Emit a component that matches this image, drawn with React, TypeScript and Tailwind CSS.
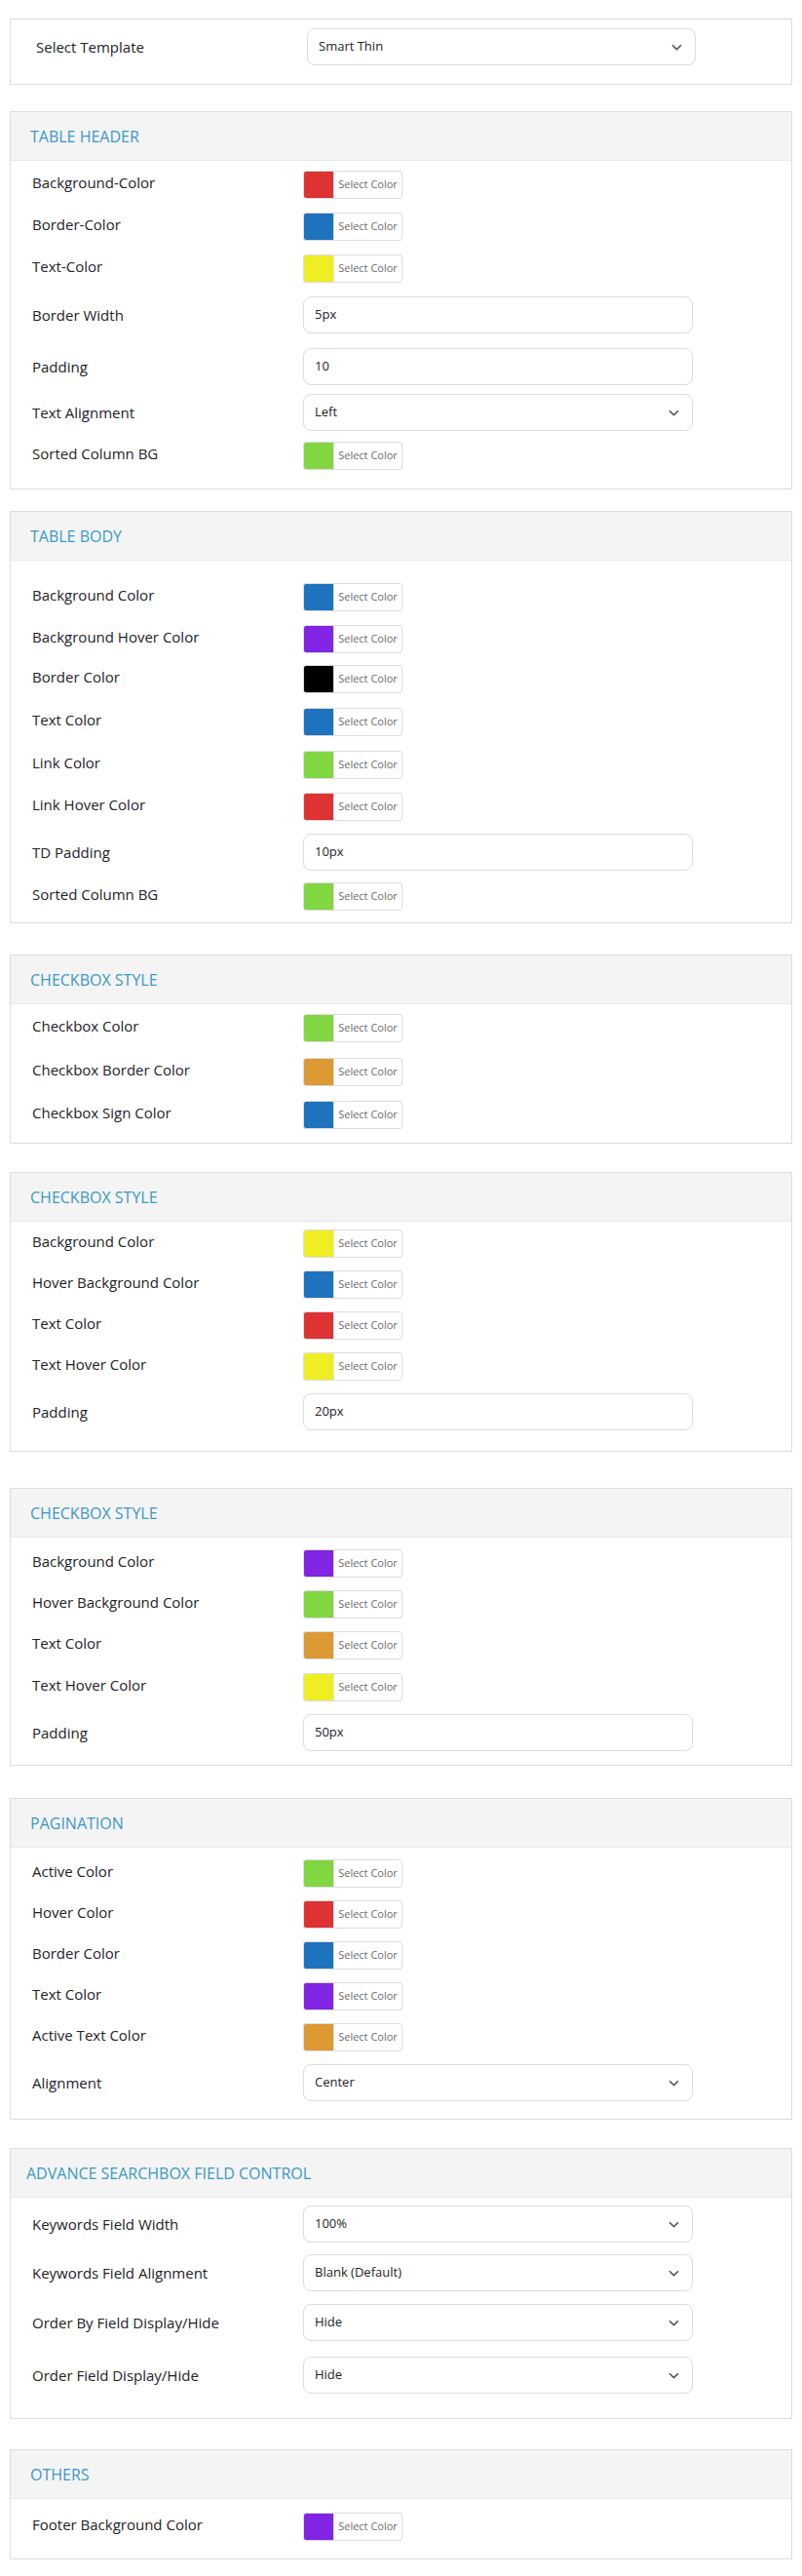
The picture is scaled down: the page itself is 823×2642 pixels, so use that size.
type RowKind = "color" | "input" | "select";

type Row = {
  label: string;
  kind: RowKind;
  value: string;
  mt: string;
};

type Section = {
  title: string;
  mt: string;
  pb: string;
  titlePad: string;
  rows: Row[];
};

const RED = "bg-[#dd3333]";
const BLUE = "bg-[#1e73be]";
const YELLOW = "bg-[#eeee22]";
const GREEN = "bg-[#81d742]";
const PURPLE = "bg-[#8224e3]";
const ORANGE = "bg-[#dd9933]";
const BLACK = "bg-[#000000]";

const sections: Section[] = [
  {
    title: "TABLE HEADER",
    mt: "mt-[27px]",
    pb: "pb-[19px]",
    titlePad: "pl-[20px]",
    rows: [
      { label: "Background-Color", kind: "color", value: RED, mt: "mt-[10px]" },
      { label: "Border-Color", kind: "color", value: BLUE, mt: "mt-[14px]" },
      { label: "Text-Color", kind: "color", value: YELLOW, mt: "mt-[14px]" },
      { label: "Border Width", kind: "input", value: "5px", mt: "mt-[14px]" },
      { label: "Padding", kind: "input", value: "10", mt: "mt-[15px]" },
      { label: "Text Alignment", kind: "select", value: "Left", mt: "mt-[9px]" },
      { label: "Sorted Column BG", kind: "color", value: GREEN, mt: "mt-[11px]" },
    ],
  },
  {
    title: "TABLE BODY",
    mt: "mt-[22px]",
    pb: "pb-[12px]",
    titlePad: "pl-[20px]",
    rows: [
      { label: "Background Color", kind: "color", value: BLUE, mt: "mt-[23px]" },
      { label: "Background Hover Color", kind: "color", value: PURPLE, mt: "mt-[14px]" },
      { label: "Border Color", kind: "color", value: BLACK, mt: "mt-[12px]" },
      { label: "Text Color", kind: "color", value: BLUE, mt: "mt-[15px]" },
      { label: "Link Color", kind: "color", value: GREEN, mt: "mt-[15px]" },
      { label: "Link Hover Color", kind: "color", value: RED, mt: "mt-[14px]" },
      { label: "TD Padding", kind: "input", value: "10px", mt: "mt-[13px]" },
      { label: "Sorted Column BG", kind: "color", value: GREEN, mt: "mt-[12px]" },
    ],
  },
  {
    title: "CHECKBOX STYLE",
    mt: "mt-[32px]",
    pb: "pb-[14px]",
    titlePad: "pl-[20px]",
    rows: [
      { label: "Checkbox Color", kind: "color", value: GREEN, mt: "mt-[10px]" },
      { label: "Checkbox Border Color", kind: "color", value: ORANGE, mt: "mt-[16px]" },
      { label: "Checkbox Sign Color", kind: "color", value: BLUE, mt: "mt-[15px]" },
    ],
  },
  {
    title: "CHECKBOX STYLE",
    mt: "mt-[29px]",
    pb: "pb-[21px]",
    titlePad: "pl-[20px]",
    rows: [
      { label: "Background Color", kind: "color", value: YELLOW, mt: "mt-[8px]" },
      { label: "Hover Background Color", kind: "color", value: BLUE, mt: "mt-[13px]" },
      { label: "Text Color", kind: "color", value: RED, mt: "mt-[13px]" },
      { label: "Text Hover Color", kind: "color", value: YELLOW, mt: "mt-[13px]" },
      { label: "Padding", kind: "input", value: "20px", mt: "mt-[13px]" },
    ],
  },
  {
    title: "CHECKBOX STYLE",
    mt: "mt-[37px]",
    pb: "pb-[14px]",
    titlePad: "pl-[20px]",
    rows: [
      { label: "Background Color", kind: "color", value: PURPLE, mt: "mt-[12px]" },
      { label: "Hover Background Color", kind: "color", value: GREEN, mt: "mt-[13px]" },
      { label: "Text Color", kind: "color", value: ORANGE, mt: "mt-[13px]" },
      { label: "Text Hover Color", kind: "color", value: YELLOW, mt: "mt-[14px]" },
      { label: "Padding", kind: "input", value: "50px", mt: "mt-[13px]" },
    ],
  },
  {
    title: "PAGINATION",
    mt: "mt-[33px]",
    pb: "pb-[18px]",
    titlePad: "pl-[20px]",
    rows: [
      { label: "Active Color", kind: "color", value: GREEN, mt: "mt-[12px]" },
      { label: "Hover Color", kind: "color", value: RED, mt: "mt-[13px]" },
      { label: "Border Color", kind: "color", value: BLUE, mt: "mt-[13px]" },
      { label: "Text Color", kind: "color", value: PURPLE, mt: "mt-[13px]" },
      { label: "Active Text Color", kind: "color", value: ORANGE, mt: "mt-[13px]" },
      { label: "Alignment", kind: "select", value: "Center", mt: "mt-[13px]" },
    ],
  },
  {
    title: "ADVANCE SEARCHBOX FIELD CONTROL",
    mt: "mt-[29px]",
    pb: "pb-[25px]",
    titlePad: "pl-[16px]",
    rows: [
      { label: "Keywords Field Width", kind: "select", value: "100%", mt: "mt-[8px]" },
      { label: "Keywords Field Alignment", kind: "select", value: "Blank (Default)", mt: "mt-[12px]" },
      { label: "Order By Field Display/Hide", kind: "select", value: "Hide", mt: "mt-[13px]" },
      { label: "Order Field Display/Hide", kind: "select", value: "Hide", mt: "mt-[16px]" },
    ],
  },
  {
    title: "OTHERS",
    mt: "mt-[31px]",
    pb: "pb-[18px]",
    titlePad: "pl-[20px]",
    rows: [
      { label: "Footer Background Color", kind: "color", value: PURPLE, mt: "mt-[14px]" },
    ],
  },
];

function Chevron() {
  return (
    <svg width="11" height="7" viewBox="0 0 11 7" fill="none" className="shrink-0">
      <path d="M1 1.2 5.5 5.6 10 1.2" stroke="#50575e" strokeWidth="1.6" />
    </svg>
  );
}

function ColorButton({ swatch }: { swatch: string }) {
  return (
    <div className="flex h-[29px] w-[102px] overflow-hidden rounded-[3px] border border-[#dcdcde] bg-white">
      <span className={`${swatch} h-full w-[30px] shrink-0`} />
      <span className="flex flex-1 items-center justify-center border-l border-[#e2e2e2] text-[11px] text-[#6b6b6b]">
        Select Color
      </span>
    </div>
  );
}

function TextBox({ value, select }: { value: string; select?: boolean }) {
  return (
    <div className="flex h-[38px] w-[400px] items-center justify-between rounded-[8px] border border-[#dcdcde] bg-white pl-[11px] pr-[13px] text-[13px] text-[#1d2327]">
      <span>{value}</span>
      {select && <Chevron />}
    </div>
  );
}

function SettingRow({ row }: { row: Row }) {
  return (
    <div className={`${row.mt} flex items-center`}>
      <div
        className={`w-[300px] shrink-0 pl-[22px] text-[15px] text-[#1d2327] ${
          row.kind === "color" ? "pb-[4px]" : ""
        }`}
      >
        {row.label}
      </div>
      {row.kind === "color" && <ColorButton swatch={row.value} />}
      {row.kind === "input" && <TextBox value={row.value} />}
      {row.kind === "select" && <TextBox value={row.value} select />}
    </div>
  );
}

function SettingsBox({ section }: { section: Section }) {
  return (
    <section className={`${section.mt} border border-[#dcdcde] bg-white`}>
      <div
        className={`flex h-[50px] items-center border-b border-[#e8e8e8] bg-[#f4f4f4] ${section.titlePad} text-[16px] text-[#3a99c5]`}
      >
        {section.title}
      </div>
      <div className={section.pb}>
        {section.rows.map((row, index) => (
          <SettingRow key={`${row.label}-${index}`} row={row} />
        ))}
      </div>
    </section>
  );
}

export default function App() {
  return (
    <div className="min-h-[2642px] bg-white px-[10px] pt-[19px] font-['Open_Sans',sans-serif]">
      <div className="w-[803px]">
        <section className="border border-[#dcdcde] bg-white pb-[19px] pt-[9px]">
          <div className="flex items-center">
            <div className="w-[304px] shrink-0 pl-[26px] text-[15px] text-[#1d2327]">
              Select Template
            </div>
            <div className="flex h-[38px] w-[399px] items-center justify-between rounded-[8px] border border-[#dcdcde] bg-white pl-[11px] pr-[13px] text-[13px] text-[#1d2327]">
              <span>Smart Thin</span>
              <Chevron />
            </div>
          </div>
        </section>

        {sections.map((section, index) => (
          <SettingsBox key={`${section.title}-${index}`} section={section} />
        ))}
      </div>
    </div>
  );
}
